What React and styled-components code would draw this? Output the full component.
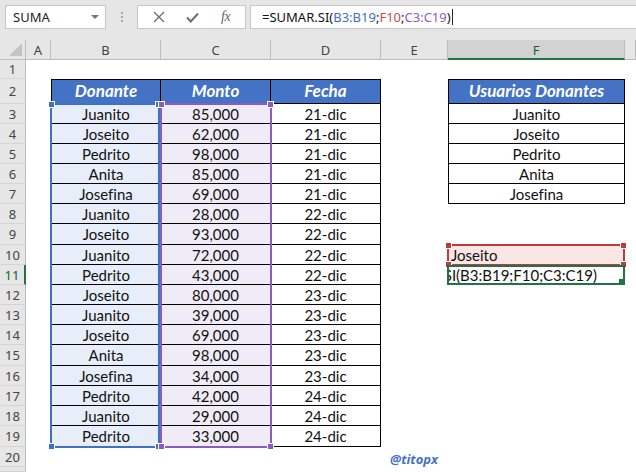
import React from "react";
import styled, { createGlobalStyle } from "styled-components";

const GlobalStyle = createGlobalStyle`
  html, body { margin: 0; padding: 0; background: #fff; }
  body { font-family: "Noto Sans", "Open Sans", sans-serif; overflow: hidden; }
`;

const COLS = ["26px", "25px", "110px", "110px", "110px", "67px", "177px", "1fr"];
const ROWS = [
  "20px", "19px", "25px",
  "20px", "20px", "20px", "20px", "20px", "20px", "21px", "20px", "20px",
  "20px", "20px", "20px", "21px", "20px", "20px", "20px", "21px",
  "20px", "1fr",
];

const DATA = [
  ["Juanito", "85,000", "21-dic"],
  ["Joseito", "62,000", "21-dic"],
  ["Pedrito", "98,000", "21-dic"],
  ["Anita", "85,000", "21-dic"],
  ["Josefina", "69,000", "21-dic"],
  ["Juanito", "28,000", "22-dic"],
  ["Joseito", "93,000", "22-dic"],
  ["Juanito", "72,000", "22-dic"],
  ["Pedrito", "43,000", "22-dic"],
  ["Joseito", "80,000", "23-dic"],
  ["Juanito", "39,000", "23-dic"],
  ["Joseito", "69,000", "23-dic"],
  ["Anita", "98,000", "23-dic"],
  ["Josefina", "34,000", "23-dic"],
  ["Pedrito", "42,000", "24-dic"],
  ["Juanito", "29,000", "24-dic"],
  ["Pedrito", "33,000", "24-dic"],
];

const USERS = ["Juanito", "Joseito", "Pedrito", "Anita", "Josefina"];

const Root = styled.div`
  width: 636px;
  height: 472px;
  display: flex;
  flex-direction: column;
  background: #e6e6e6;
`;

const TopBar = styled.div`
  height: 40px;
  flex: none;
  display: flex;
  align-items: flex-start;
  padding: 5px 0 0 5px;
  box-sizing: border-box;
`;

const Box = styled.div`
  height: 24px;
  box-sizing: border-box;
  background: #fff;
  border: 1px solid #c6c6c6;
  display: flex;
  align-items: center;
`;

const NameBox = styled(Box)`
  width: 101px;
  padding: 0 6px 0 7px;
  justify-content: space-between;
  font-size: 13px;
  color: #222;
`;

const Caret = styled.span`
  width: 0;
  height: 0;
  border-left: 4px solid transparent;
  border-right: 4px solid transparent;
  border-top: 4px solid #777;
`;

const Dots = styled.div`
  width: 31px;
  height: 24px;
  display: flex;
  flex-direction: column;
  align-items: center;
  justify-content: center;
  gap: 2px;
  span {
    width: 2px;
    height: 2px;
    background: #a8a8a8;
  }
`;

const ButtonBox = styled(Box)`
  width: 109px;
  justify-content: space-around;
  padding: 0 4px;
`;

const Fx = styled.span`
  font-family: "Liberation Serif", serif;
  font-style: italic;
  font-size: 14px;
  color: #666;
  letter-spacing: -0.5px;
`;

const FormulaBox = styled(Box)`
  flex: 1;
  margin-left: 4px;
  border-right: none;
  padding-left: 11px;
  font-size: 13px;
  color: #111;
  white-space: pre;
`;

const Ref = styled.span`
  color: ${(p) => p.$c};
`;

const TextCaret = styled.span`
  display: inline-block;
  width: 1px;
  height: 16px;
  background: #222;
  margin-left: 1px;
`;

const Sheet = styled.div`
  flex: 1;
  display: grid;
  grid-template-columns: ${COLS.join(" ")};
  grid-template-rows: ${ROWS.join(" ")};
  background: #fff;
  overflow: hidden;
`;

const Placed = styled.div`
  grid-row: ${(p) => p.$r};
  grid-column: ${(p) => p.$c};
  box-sizing: border-box;
  min-width: 0;
  min-height: 0;
`;

const Corner = styled(Placed)`
  background: #e6e6e6;
  border-right: 1px solid #bdbdbd;
  border-bottom: 1px solid #bdbdbd;
  position: relative;
  &::after {
    content: "";
    position: absolute;
    right: 3px;
    bottom: 3px;
    border-left: 13px solid transparent;
    border-bottom: 13px solid #c4c4c4;
  }
`;

const ColHead = styled(Placed)`
  background: ${(p) => (p.$sel ? "#d2d2d2" : "#e6e6e6")};
  border-right: 1px solid #bdbdbd;
  border-bottom: ${(p) => (p.$sel ? "2px solid #217346" : "1px solid #bdbdbd")};
  display: flex;
  align-items: center;
  justify-content: center;
  font-size: 13px;
  color: ${(p) => (p.$sel ? "#1d5b36" : "#444")};
  padding-top: ${(p) => (p.$sel ? "1px" : "0")};
`;

const RowHead = styled(Placed)`
  background: #e6e6e6;
  border-right: ${(p) => (p.$sel ? "2px solid #217346" : "1px solid #bdbdbd")};
  border-bottom: 1px solid #d4d4d4;
  display: flex;
  align-items: center;
  justify-content: center;
  font-size: 13px;
  color: ${(p) => (p.$sel ? "#1d5b36" : "#444")};
  overflow: hidden;
`;

const Cell = styled(Placed)`
  background: ${(p) => p.$bg || "transparent"};
  border-right: ${(p) => (p.$tb ? "1px solid #000" : "none")};
  border-bottom: ${(p) => (p.$tb ? "1px solid #000" : "none")};
  border-left: ${(p) => (p.$bl ? "1px solid #000" : "none")};
  border-top: ${(p) => (p.$bt ? "1px solid #000" : "none")};
  display: flex;
  align-items: center;
  justify-content: ${(p) => (p.$left ? "flex-start" : "center")};
  padding-left: ${(p) => (p.$left ? "3px" : "0")};
  font-family: "Lato", "Noto Sans", sans-serif;
  font-variant-ligatures: none;
  font-size: 15px;
  color: #111;
  white-space: nowrap;
  overflow: hidden;
`;

const HeadCell = styled(Cell)`
  background: #4472c4;
  align-items: flex-end;
  padding-bottom: 2px;
  color: #fff;
  font-weight: 700;
  font-style: italic;
  font-size: 17px;
`;

const Range = styled(Placed)`
  position: relative;
  margin: ${(p) => p.$m || "-1px 0 -1px -1px"};
  border: 2px solid ${(p) => p.$color};
  pointer-events: none;
  z-index: 2;
`;

const Handle = styled.span`
  position: absolute;
  width: 5px;
  height: 5px;
  background: ${(p) => p.$color};
  border: 1px solid #fff;
  ${(p) => (p.$top ? "top: -4px;" : "bottom: -4px;")}
  ${(p) => (p.$left ? "left: -4px;" : "right: -4px;")}
`;

const EditCell = styled(Placed)`
  position: relative;
  margin: 0 0 0 -1px;
  border: 2px solid #217346;
  z-index: 3;
  display: flex;
  align-items: center;
  justify-content: flex-end;
  padding-right: 26px;
  overflow: hidden;
  font-family: "Lato", "Noto Sans", sans-serif;
  font-size: 15px;
  color: #111;
  white-space: nowrap;
`;

const FillHandle = styled.span`
  position: absolute;
  right: -1px;
  bottom: -1px;
  width: 5px;
  height: 5px;
  background: #217346;
  border-left: 1px solid #fff;
  border-top: 1px solid #fff;
`;

const Watermark = styled(Placed)`
  display: flex;
  align-items: center;
  padding: 4px 0 0 9px;
  font-family: "Open Sans", "Noto Sans", sans-serif;
  font-weight: 700;
  font-style: italic;
  font-size: 13px;
  color: #4472c4;
`;

function Handles({ color }) {
  return (
    <>
      <Handle $color={color} $top $left />
      <Handle $color={color} $top />
      <Handle $color={color} $left />
      <Handle $color={color} />
    </>
  );
}

function XIcon() {
  return (
    <svg width="12" height="12" viewBox="0 0 12 12">
      <path d="M1 1 L11 11 M11 1 L1 11" stroke="#6e6e6e" strokeWidth="1.4" fill="none" />
    </svg>
  );
}

function CheckIcon() {
  return (
    <svg width="13" height="11" viewBox="0 0 13 11">
      <path d="M1 5.5 L4.8 9.5 L12 1.5" stroke="#6e6e6e" strokeWidth="2" fill="none" />
    </svg>
  );
}

const LETTERS = ["A", "B", "C", "D", "E", "F", "G"];

export default function App() {
  const cells = [];

  cells.push(<Corner key="corner" $r={1} $c={1} />);
  LETTERS.forEach((l, i) => {
    cells.push(
      <ColHead key={"h" + l} $r={1} $c={i + 2} $sel={l === "F"}>
        {l === "G" ? "" : l}
      </ColHead>
    );
  });

  // sheet row n sits on grid row n + 1; row 21 only peeks in at the bottom
  for (let r = 1; r <= 21; r++) {
    cells.push(
      <RowHead key={"r" + r} $r={r + 1} $c={1} $sel={r === 11}>
        {r < 21 ? r : ""}
      </RowHead>
    );
  }

  ["Donante", "Monto", "Fecha"].forEach((t, i) => {
    cells.push(
      <HeadCell key={"th" + i} $r={3} $c={i + 3} $tb $bt $bl={i === 0}>
        {t}
      </HeadCell>
    );
  });

  DATA.forEach((row, ri) => {
    row.forEach((v, ci) => {
      const bg = ci === 0 ? "#e7eef9" : ci === 1 ? "#f0ecf7" : undefined;
      cells.push(
        <Cell key={"d" + ri + "-" + ci} $r={ri + 4} $c={ci + 3} $tb $bl={ci === 0} $bg={bg}>
          {v}
        </Cell>
      );
    });
  });

  cells.push(
    <HeadCell key="uh" $r={3} $c={7} $tb $bt $bl>
      Usuarios Donantes
    </HeadCell>
  );
  USERS.forEach((u, i) => {
    cells.push(
      <Cell key={"u" + i} $r={i + 4} $c={7} $tb $bl>
        {u}
      </Cell>
    );
  });

  return (
    <Root>
      <GlobalStyle />
      <TopBar>
        <NameBox>
          SUMA
          <Caret />
        </NameBox>
        <Dots>
          <span />
          <span />
          <span />
        </Dots>
        <ButtonBox>
          <XIcon />
          <CheckIcon />
          <Fx>fx</Fx>
        </ButtonBox>
        <FormulaBox>
          =SUMAR.SI(<Ref $c="#3f6fc4">B3:B19</Ref>;<Ref $c="#d04a4a">F10</Ref>;
          <Ref $c="#8d5cc4">C3:C19</Ref>)
          <TextCaret />
        </FormulaBox>
      </TopBar>
      <Sheet>
        {cells}
        <Range $r="4 / 21" $c="3" $color="#3d70c6" $m="-1px 1px -1px -1px">
          <Handles color="#3d70c6" />
        </Range>
        <Range $r="4 / 21" $c="4" $color="#8a5cc2" $m="-1px -1px -1px -1px">
          <Handles color="#8a5cc2" />
        </Range>
        <Cell $r={11} $c={7} $left $bg="#fbe6e6">
          Joseito
        </Cell>
        <Range $r="11" $c="7" $color="#c0393e" $m="-1px 0 -1px -1px">
          <Handles color="#c0393e" />
        </Range>
        <EditCell $r={12} $c={7}>
          =SUMAR.SI(B3:B19;F10;C3:C19)
          <FillHandle />
        </EditCell>
        <Watermark $r={21} $c="6 / 8">@titopx</Watermark>
      </Sheet>
    </Root>
  );
}
